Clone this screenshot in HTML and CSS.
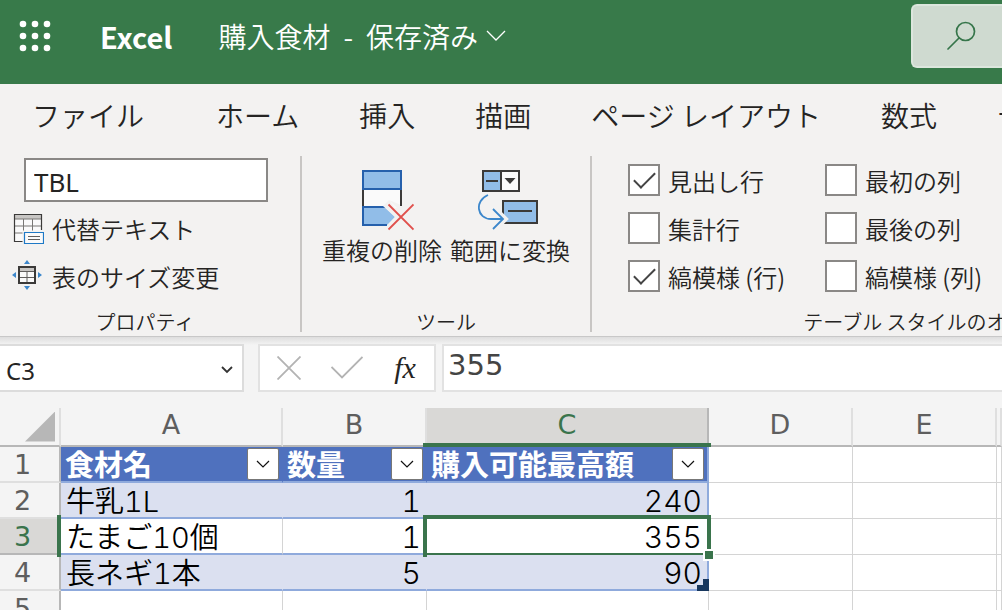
FILE: index.html
```html
<!DOCTYPE html>
<html lang="ja">
<head>
    <meta charset="UTF-8">
    <meta name="viewport" content="width=device-width, initial-scale=1.0">
    <title>購入食材 - Excel</title>
    <link rel="stylesheet" href="styles.css">
</head>
<body>
    <header class="topbar">
        <button class="launcher" aria-label="アプリ起動ツール">
            <svg width="32" height="32" viewBox="0 0 32 32" fill="#fff">
                <circle cx="4" cy="4" r="3.3"/><circle cx="16" cy="4" r="3.3"/><circle cx="28" cy="4" r="3.3"/>
                <circle cx="4" cy="16" r="3.3"/><circle cx="16" cy="16" r="3.3"/><circle cx="28" cy="16" r="3.3"/>
                <circle cx="4" cy="28" r="3.3"/><circle cx="16" cy="28" r="3.3"/><circle cx="28" cy="28" r="3.3"/>
            </svg>
        </button>
        <span class="brand">Excel</span>
        <button class="doc-title">
            <span>購入食材</span><span>-</span><span>保存済み</span>
            <svg width="20" height="12" viewBox="0 0 20 12" fill="none" stroke="#fff" stroke-width="1.3"><path d="M1 1l9 9 9-9"/></svg>
        </button>
        <button class="search" aria-label="検索">
            <svg width="30" height="30" viewBox="0 0 30 30" fill="none" stroke="#36754a" stroke-width="1.7" stroke-linecap="round"><circle cx="18.500" cy="10.500" r="9"/><path d="M12 17L1 28"/></svg>
        </button>
    </header>

    <nav class="tabs">
        <a href="#" class="file">ファイル</a>
        <a href="#">ホーム</a>
        <a href="#">挿入</a>
        <a href="#">描画</a>
        <a href="#">ページ レイアウト</a>
        <a href="#">数式</a>
        <a href="#">データ</a>
    </nav>

    <div class="ribbon">
        <section class="group props">
            <div>
                <input type="text" class="table-name" value="TBL" aria-label="テーブル名">
                <button class="row-btn">
                    <svg width="32" height="34" viewBox="0 0 32 34" fill="none">
                        <path d="M2.500 3.500h27v27h-27z" fill="#fafafa"/>
                        <path d="M3 4h26v4H3z" fill="#c8c6c4"/>
                        <path d="M3 8h26M3 15h26M3 22h10M11.500 8v14M20.500 8v12" stroke="#797775"/>
                        <path d="M11 30.500H2.500v-27h27V19" stroke="#3b3a39" stroke-width="1.200"/>
                        <path d="M10.500 19.500h22v14h-22z" fill="#f3f2f1"/>
                        <path d="M12.500 21.500h19v11h-19z" fill="#fafafa" stroke="#1e79c6" stroke-width="1.200"/>
                        <path d="M16 25.500h12M16 28.500h12" stroke="#605e5c"/>
                    </svg>
                    代替テキスト
                </button>
                <button class="row-btn">
                    <svg width="32" height="32" viewBox="0 0 32 32" fill="none">
                        <path d="M7 7h16v16H7z" fill="#fafafa"/>
                        <path d="M7 7h16v4H7z" fill="#c8c6c4"/>
                        <path d="M7 11.500h16M7 17.500h16M15 11v12" stroke="#605e5c"/>
                        <path d="M7 7h16v16H7z" stroke="#3b3a39" stroke-width="2"/>
                        <path d="M15 0l3 4h-6zM15 30l3-4h-6zM0 15l4-3v6zM30 15l-4-3v6z" fill="#3c87cb"/>
                    </svg>
                    表のサイズ変更
                </button>
            </div>
            <h2>プロパティ</h2>
        </section>

        <section class="group tools">
            <div class="big-buttons">
                <button class="big-btn">
                    <svg width="64" height="64" viewBox="0 0 64 64" fill="none">
                        <path d="M13 22h38v18H13z" fill="#fafafa"/>
                        <path d="M13 22v16" stroke="#3b3a39" stroke-width="2"/>
                        <path d="M13 3h38v18H13z" fill="#91bde8" stroke="#2560ac" stroke-width="2"/>
                        <path d="M13 39h22l10 10-8 8H13z" fill="#91bde8"/>
                        <path d="M36 39H13v18h24" stroke="#2560ac" stroke-width="2"/>
                        <path d="M39 32l12 12 4-4v-2h-4v-1l-12-5-6 6 12 11-8 9 5 3 10-11z" fill="#f3f2f1"/>
                        <path d="M51 22v16" stroke="#3b3a39" stroke-width="2"/>
                        <path d="M38.500 36.500l25 25M63.500 36.500l-25 25" stroke="#e0504c" stroke-width="1.800"/>
                    </svg>
                    重複の削除
                </button>
                <button class="big-btn">
                    <svg width="64" height="64" viewBox="0 0 64 64" fill="none">
                        <path d="M5 3h18v20H5z" fill="#91bde8"/>
                        <path d="M23 3h18v20H23z" fill="#fafafa"/>
                        <path d="M5 3h36v20H5zM23 3v20" stroke="#3b3a39" stroke-width="2"/>
                        <path d="M8 13h12" stroke="#3b3a39" stroke-width="2"/>
                        <path d="M26.500 10h11L32 16z" fill="#3b3a39"/>
                        <path d="M25 33h34v22H25z" fill="#91bde8" stroke="#3b3a39" stroke-width="2"/>
                        <path d="M30 43h24" stroke="#3b3a39" stroke-width="2"/>
                        <path d="M18 41l10 10-10 10" stroke="#f3f2f1" stroke-width="4"/>
                        <path d="M10 27C-4 33-1 51 13 51h12M15 41l10 10-10 10" stroke="#3c87cb" stroke-width="1.800"/>
                    </svg>
                    範囲に変換
                </button>
            </div>
            <h2>ツール</h2>
        </section>

        <section class="group options">
            <div class="checks">
                <label><input type="checkbox" checked>見出し行</label>
                <label><input type="checkbox">最初の列</label>
                <label><input type="checkbox">集計行</label>
                <label><input type="checkbox">最後の列</label>
                <label><input type="checkbox" checked>縞模様 (行)</label>
                <label><input type="checkbox">縞模様 (列)</label>
            </div>
            <h2>テーブル スタイルのオプション</h2>
        </section>
    </div>

    <div class="formula-row">
        <div class="name-box">
            <input type="text" value="C3" aria-label="名前ボックス">
            <button aria-label="名前の一覧">
                <svg width="12" height="8" viewBox="0 0 12 8" fill="none" stroke="#333" stroke-width="1.800"><path d="M1 1l5 5 5-5"/></svg>
            </button>
        </div>
        <div class="fx-box">
            <button aria-label="キャンセル">
                <svg width="24" height="24" viewBox="0 0 24 24" fill="none" stroke="#b3b3b3" stroke-width="1.800"><path d="M.5.5l23 23M23.500.5l-23 23"/></svg>
            </button>
            <button aria-label="入力">
                <svg width="32" height="24" viewBox="0 0 32 24" fill="none" stroke="#b3b3b3" stroke-width="1.800"><path d="M.5 11l10.500 10.500L31.500 1"/></svg>
            </button>
            <button class="fx" aria-label="関数の挿入">fx</button>
        </div>
        <input type="text" class="formula" value="355" aria-label="数式バー">
    </div>

    <table class="sheet">
        <colgroup>
            <col class="w-head"><col class="w-a"><col class="w-b"><col class="w-c"><col class="w-d"><col class="w-d"><col>
        </colgroup>
        <thead>
            <tr>
                <th class="corner"><button aria-label="すべて選択"></button></th>
                <th>A</th>
                <th>B</th>
                <th class="active">C</th>
                <th>D</th>
                <th>E</th>
                <th></th>
            </tr>
        </thead>
        <tbody>
            <tr class="title-row">
                <th>1</th>
                <td><div class="field"><span>食材名</span><button aria-label="食材名のフィルター"><svg width="14" height="8" viewBox="0 0 14 8" fill="none" stroke="#111" stroke-width="1.200"><path d="M1 1l6 6 6-6"/></svg></button></div></td>
                <td><div class="field"><span>数量</span><button aria-label="数量のフィルター"><svg width="14" height="8" viewBox="0 0 14 8" fill="none" stroke="#111" stroke-width="1.200"><path d="M1 1l6 6 6-6"/></svg></button></div></td>
                <td class="edge"><div class="field"><span>購入可能最高額</span><button aria-label="購入可能最高額のフィルター"><svg width="14" height="8" viewBox="0 0 14 8" fill="none" stroke="#111" stroke-width="1.200"><path d="M1 1l6 6 6-6"/></svg></button></div></td>
                <td></td><td></td><td></td>
            </tr>
            <tr class="data band">
                <th>2</th>
                <td>牛乳1L</td>
                <td class="num">1</td>
                <td class="num edge">240</td>
                <td></td><td></td><td></td>
            </tr>
            <tr class="data">
                <th class="active">3</th>
                <td>たまご10個</td>
                <td class="num">1</td>
                <td class="num edge selected">355<span class="handle"></span></td>
                <td></td><td></td><td></td>
            </tr>
            <tr class="data band">
                <th>4</th>
                <td>長ネギ1本</td>
                <td class="num">5</td>
                <td class="num edge table-end">90</td>
                <td></td><td></td><td></td>
            </tr>
            <tr>
                <th>5</th>
                <td></td><td></td><td></td><td></td><td></td><td></td>
            </tr>
        </tbody>
    </table>
</body>
</html>
```

FILE: styles.css
```css
* {
    box-sizing: border-box;
}
body {
    margin: 0;
    height: 100vh;
    overflow: hidden;
    background: #f4f4f4;
    color: #252423;
    font-family: "Noto Sans CJK JP", sans-serif;
    font-weight: 350;
    font-size: 24px;
}
button, input {
    font: inherit;
    color: inherit;
    border: 0;
    margin: 0;
    padding: 0;
    background: none;
    border-radius: 0;
}
svg {
    display: block;
    flex: none;
}

/* title bar */
.topbar {
    display: flex;
    align-items: center;
    height: 84px;
    padding: 0 0 12px 19px;
    background: #387a4a;
    color: #fff;
    font-size: 28px;
}
.launcher {
    margin-right: 49px;
}
.brand {
    font-size: 29px;
    font-weight: 700;
    margin-right: 46px;
}
.doc-title {
    display: flex;
    align-items: center;
    gap: 13px;
}
.doc-title svg {
    margin-left: -5px;
}
.search {
    width: 91px;
    height: 64px;
    margin-left: auto;
    padding-left: 34px;
    background: #cfdad0;
    border: 2px solid #dce6dd;
    border-right: 0;
    border-radius: 6px 0 0 6px;
}

/* ribbon */
.tabs {
    display: flex;
    gap: 60px;
    height: 72px;
    padding-left: 32px;
    background: #f3f2f1;
    font-size: 28px;
    line-height: 62px;
    overflow: hidden;
}
.tabs a {
    flex: none;
    color: inherit;
    text-decoration: none;
}
.tabs .file {
    margin-right: 12px;
}
.ribbon {
    display: flex;
    height: 180px;
    padding-bottom: 4px;
    background: #f3f2f1;
    overflow: hidden;
}
.group {
    flex: none;
    display: flex;
    flex-direction: column;
    justify-content: space-between;
    border-right: 2px solid #c8c6c4;
}
.group h2 {
    margin: 0;
    font-size: 20px;
    font-weight: 350;
    line-height: 20px;
    text-align: center;
    white-space: nowrap;
}
.props {
    width: 302px;
    padding: 0 22px 0 12px;
}
.table-name {
    display: block;
    width: 244px;
    height: 44px;
    margin: 2px 0 2px 12px;
    padding: 4px 8px 0;
    background: #fff;
    border: 2px solid #8a8886;
    font-family: "Noto Sans", sans-serif;
    font-size: 26px;
    font-weight: 400;
}
.row-btn {
    display: flex;
    align-items: center;
    gap: 8px;
    height: 48px;
}
.tools {
    width: 290px;
}
.big-buttons {
    display: flex;
    justify-content: center;
    gap: 8px;
    padding-top: 12px;
}
.big-btn {
    display: flex;
    flex-direction: column;
    align-items: center;
    gap: 6px;
    line-height: 24px;
}
.options {
    width: 706px;
    border-right: 0;
}
.checks {
    display: grid;
    grid-template-columns: 197px 197px;
    padding-left: 36px;
}
.checks label {
    display: flex;
    align-items: center;
    gap: 8px;
    height: 48px;
}
.checks input {
    appearance: none;
    display: grid;
    place-content: center;
    width: 32px;
    height: 32px;
    background: #fff;
    border: 2px solid #8a8886;
}
.checks input:checked::before {
    content: "";
    width: 9px;
    height: 19px;
    border: solid #444;
    border-width: 0 2px 2px 0;
    transform: translateY(-3px) rotate(45deg);
}

/* formula bar */
.formula-row {
    display: flex;
    height: 72px;
    padding: 7px 0 16px;
    border-top: 1px solid #c8c8c8;
    background: linear-gradient(#dedede, #f4f4f4 8px);
}
.name-box, .fx-box, .formula {
    background: #fff;
    border: 2px solid #e2e2e2;
}
.name-box {
    display: flex;
    width: 244px;
    margin-right: 14px;
    border-left: 0;
    border-color: #dcdcdc;
}
.name-box input {
    flex: 1;
    min-width: 0;
    padding: 4px 0 0 6px;
    font-family: "Noto Sans", sans-serif;
    font-weight: 400;
}
.name-box button {
    padding: 4px 9px 0;
}
.fx-box {
    display: flex;
    width: 178px;
    margin-right: 6px;
}
.fx-box button {
    flex: 1;
    display: grid;
    place-items: center;
}
.fx-box .fx {
    font-family: "Liberation Serif", serif;
    font-style: italic;
    font-weight: 400;
    font-size: 30px;
}
.formula {
    flex: 1;
    min-width: 0;
    padding: 0 4px 6px;
    border-right: 0;
    color: #444;
    font-family: "DejaVu Sans", sans-serif;
    font-size: 29px;
    font-weight: 400;
}

/* sheet */
.sheet {
    width: 100%;
    table-layout: fixed;
    border-collapse: separate;
    border-spacing: 0;
}
.w-head {
    width: 61px;
}
.w-a {
    width: 222px;
}
.w-b, .w-d {
    width: 144px;
}
.w-c {
    width: 282px;
}
.sheet th {
    position: relative;
    padding: 0;
    background: #f4f4f4;
    color: #5e5e5e;
    font-family: "DejaVu Sans", sans-serif;
    font-size: 27px;
    font-weight: 400;
    line-height: 32px;
}
.sheet thead th {
    height: 39px;
    padding-bottom: 4px;
    border-right: 2px solid #dfdfdf;
    border-bottom: 2px solid #b7b7b7;
}
.sheet tbody th {
    height: 36px;
    padding: 1px 14px 0 0;
    border-right: 2px solid #b7b7b7;
    border-bottom: 2px solid #dfdfdf;
}
.sheet thead .corner {
    padding: 0;
}
.corner button {
    display: block;
    width: 30px;
    height: 30px;
    margin-left: 25px;
    background: #b7b7b7;
    clip-path: polygon(100% 0, 100% 100%, 0 100%);
}
.sheet th.active {
    background: #d9d8d6;
    color: #3a744c;
    border-color: #b7b7b7;
}
thead .active::after {
    content: "";
    position: absolute;
    left: -4px;
    right: -4px;
    bottom: -2px;
    height: 4px;
    background: #3a744c;
    z-index: 1;
}
tbody .active::after {
    content: "";
    position: absolute;
    top: -4px;
    bottom: -4px;
    right: -2px;
    width: 4px;
    background: #3a744c;
    z-index: 1;
}
.sheet td {
    height: 36px;
    padding: 3px 5px 0;
    background: #fff;
    border-right: 1px solid #d4d4d4;
    border-bottom: 1px solid #d4d4d4;
    color: #000;
    font-family: Inter, "Noto Sans CJK JP", sans-serif;
    font-size: 29px;
    font-variant-numeric: tabular-nums;
    line-height: 31px;
    white-space: nowrap;
}
.sheet .num {
    font-size: 30px;
    text-align: right;
}
.title-row td:nth-child(-n+4),
.data td:nth-child(-n+4) {
    border-bottom: 2px solid #8faadc;
}
.title-row td:nth-child(-n+4) {
    padding: 0 3px 0 4px;
    background: #4f71be;
    border-right-color: #4f71be;
    color: #fff;
    font-weight: 700;
}
.band td:nth-child(-n+4) {
    background: #dbe0f0;
    border-right-color: #dbe0f0;
}
.sheet td.edge:nth-child(4) {
    border-right: 2px solid #8faadc;
}
.field {
    display: flex;
    align-items: center;
    justify-content: space-between;
    height: 34px;
    line-height: 30px;
}
.field span {
    padding-top: 4px;
}
.field button {
    display: grid;
    place-items: center;
    width: 32px;
    height: 32px;
    background: #fff;
    border: 1px solid #777;
    border-radius: 2px;
}
.selected, .table-end {
    position: relative;
}
.selected::before {
    content: "";
    position: absolute;
    inset: -4px;
    border: 4px solid #3a744c;
}
.handle {
    position: absolute;
    right: -8px;
    bottom: -8px;
    width: 12px;
    height: 12px;
    background: #3a744c;
    border: 2px solid #fff;
    z-index: 1;
}
.table-end::after {
    content: "";
    position: absolute;
    right: -2px;
    bottom: -2px;
    width: 12px;
    height: 12px;
    background: #17375e;
    clip-path: polygon(50% 0, 100% 0, 100% 100%, 0 100%, 0 50%, 50% 50%);
}
```
